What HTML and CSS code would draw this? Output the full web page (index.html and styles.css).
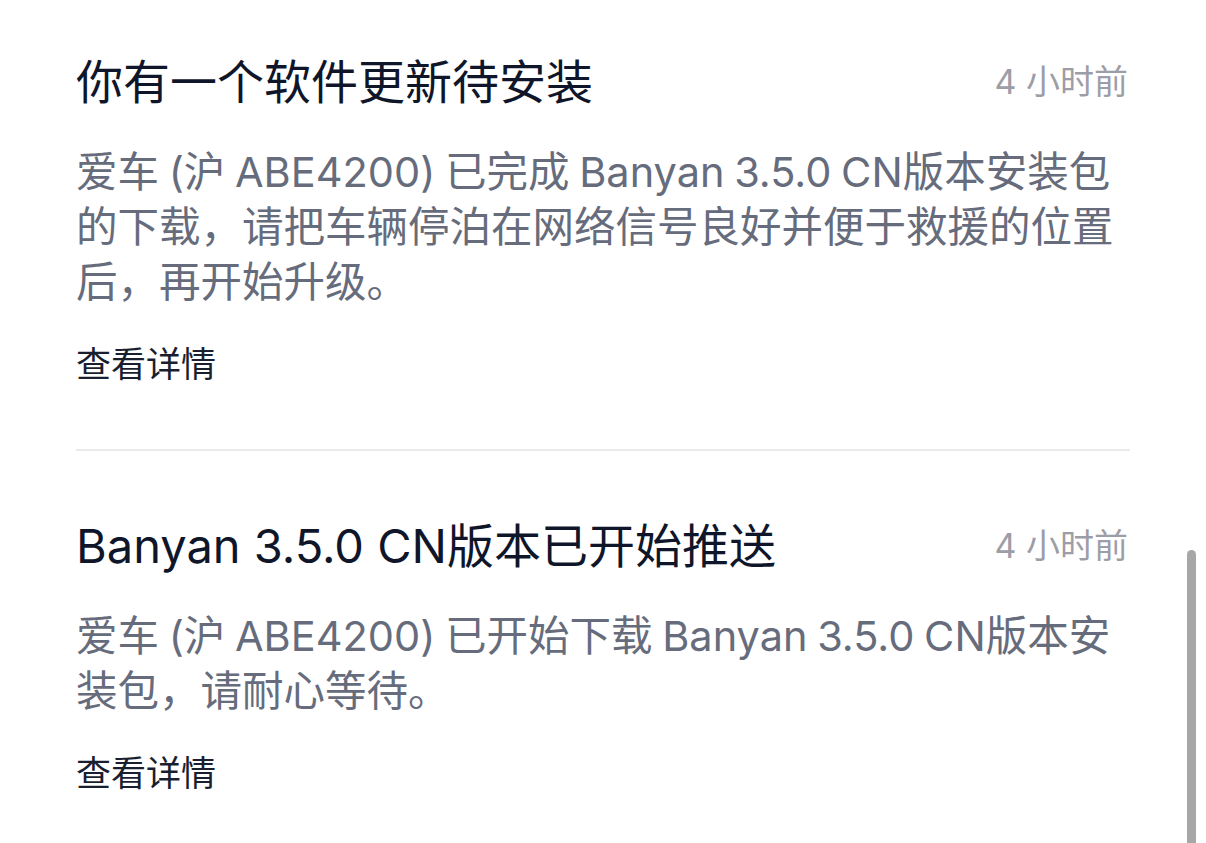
FILE: index.html
```html
<!DOCTYPE html>
<html lang="zh-CN">
<head>
<meta charset="utf-8">
<title>消息</title>
<link rel="stylesheet" href="styles.css">
</head>
<body>
<main class="list">
  <section class="item">
    <div class="head">
      <h2 class="title">你有一个软件更新待安装</h2>
      <span class="time">4 小时前</span>
    </div>
    <p class="body">爱车 (沪 ABE4200) 已完成 Banyan 3.5.0 CN版本安装包<br>的下载，请把车辆停泊在网络信号良好并便于救援的位置<br>后，再开始升级。</p>
    <a class="link">查看详情</a>
  </section>
  <section class="item">
    <div class="head">
      <h2 class="title">Banyan 3.5.0 CN版本已开始推送</h2>
      <span class="time">4 小时前</span>
    </div>
    <p class="body">爱车 (沪 ABE4200) 已开始下载 Banyan 3.5.0 CN版本安<br>装包，请耐心等待。</p>
    <a class="link">查看详情</a>
  </section>
</main>
<div class="scrollbar"></div>
</body>
</html>
```
FILE: styles.css
```css
html, body {
  margin: 0;
  padding: 0;
  background: #ffffff;
  height: 100%;
  overflow: hidden;
}
body {
  font-family: Inter, "Noto Sans CJK SC", sans-serif;
}
.list {
  padding: 0 76px;
  width: 1054px;
}
.item {
  display: flex;
  flex-direction: column;
  padding: 65px 0 59px;
}
.item:first-child {
  padding-top: 52px;
  padding-bottom: 61px;
  border-bottom: 2px solid #ebebee;
}
.head {
  display: flex;
  align-items: center;
  justify-content: space-between;
}
.title {
  margin: 0;
  font-size: 47px;
  line-height: 60px;
  font-weight: 400;
  color: #10162a;
}
.time {
  font-size: 34px;
  line-height: 60px;
  color: #9c9da6;
  margin-right: 2px;
}
.body {
  margin: 33px 0 0;
  font-size: 41.5px;
  line-height: 55px;
  word-spacing: -2px;
  color: #666c7c;
  white-space: nowrap;
}
.link {
  margin-top: 30px;
  font-size: 35px;
  line-height: 48px;
  color: #1a1f2f;
}
.scrollbar {
  position: fixed;
  left: 1187px;
  top: 550px;
  width: 9px;
  bottom: 0;
  background: #a7a7a7;
  border-radius: 5px 5px 0 0;
}
```
